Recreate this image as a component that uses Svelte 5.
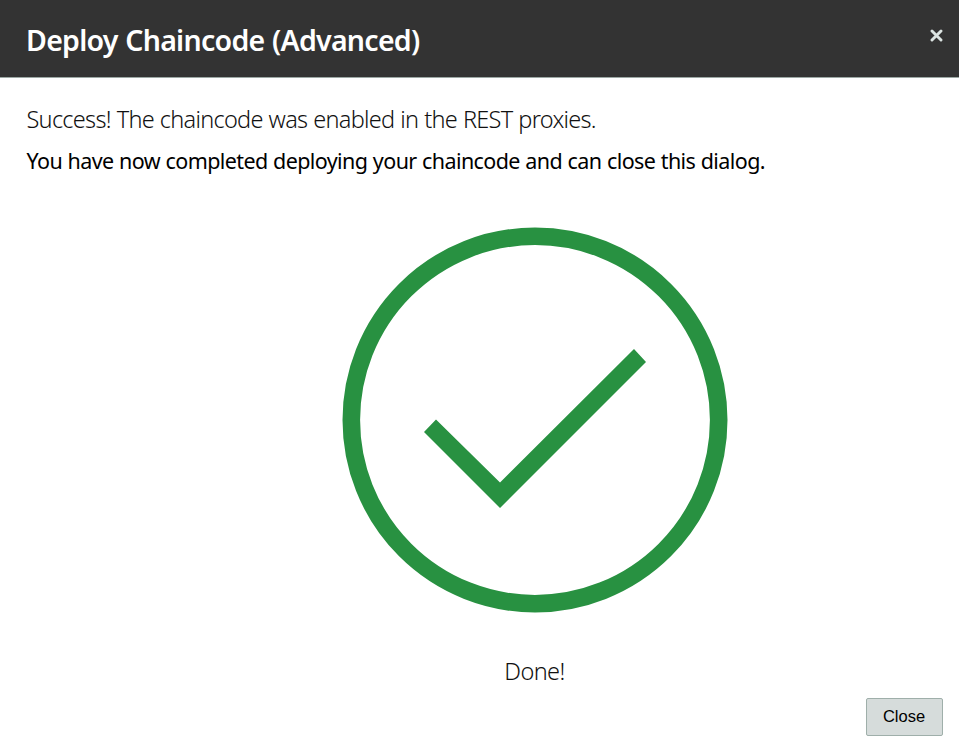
<script>
  let open = $state(true);
  const close = () => (open = false);
</script>

{#if open}
  <section class="dialog" role="dialog" aria-labelledby="dialog-title">
    <header>
      <h1 id="dialog-title">Deploy Chaincode (Advanced)</h1>
      <button class="dismiss" aria-label="Close dialog" onclick={close}>
        <svg width="13" height="13" viewBox="0 0 13 13">
          <path d="M2 2 11 11M11 2 2 11" fill="none" stroke="#dce4e2" stroke-width="2.9" stroke-linecap="round" />
        </svg>
      </button>
    </header>

    <main>
      <p class="success">Success! The chaincode was enabled in the REST proxies.</p>
      <p class="message">You have now completed deploying your chaincode and can close this dialog.</p>
      <div class="result">
        <svg width="386" height="386" viewBox="0 0 386 386" aria-hidden="true">
          <circle cx="193" cy="193" r="183.7" fill="none" stroke="#289141" stroke-width="17.6" />
          <path d="M82 205 94 192.5 158 255.5 292 122 304 135 158 281Z" fill="#289141" />
        </svg>
        <p class="done">Done!</p>
      </div>
    </main>

    <footer>
      <button class="close" onclick={close}>Close</button>
    </footer>
  </section>
{/if}

<style>
  :global(body) {
    background: #fff;
  }
  .dialog {
    display: flex;
    flex-direction: column;
    box-sizing: border-box;
    width: 100%;
    height: 748px;
    overflow: hidden;
    font-family: "Noto Sans", "Open Sans", sans-serif;
    color: #111;
  }
  header {
    display: flex;
    justify-content: space-between;
    align-items: flex-start;
    box-sizing: border-box;
    height: 78px;
    padding: 20px 16px 0 26px;
    background: #333;
    border-bottom: 1px solid #9ca8a4;
  }
  h1 {
    margin: 0;
    font-size: 28.5px;
    line-height: 40px;
    font-weight: 600;
    letter-spacing: -0.72px;
    word-spacing: 0.8px;
    color: #fff;
    white-space: nowrap;
  }
  .dismiss {
    display: flex;
    margin-top: 9px;
    padding: 0;
    border: 0;
    background: none;
  }
  main {
    padding: 20px 0 0 26.5px;
  }
  p {
    margin: 0;
    white-space: nowrap;
  }
  .success {
    font-size: 23.5px;
    line-height: 42px;
    font-weight: 300;
    letter-spacing: -0.72px;
    word-spacing: 0.5px;
  }
  .message {
    font-size: 21.5px;
    line-height: 42px;
    letter-spacing: -0.6px;
    word-spacing: 0.5px;
    color: #000;
  }
  .result {
    display: flex;
    flex-direction: column;
    align-items: center;
    padding: 45px 0 0 83.5px;
  }
  .result svg {
    display: block;
  }
  .done {
    margin-top: 41px;
    font-size: 23.5px;
    line-height: 34px;
    font-weight: 300;
    letter-spacing: -0.6px;
  }
  footer {
    display: flex;
    justify-content: flex-end;
    margin-top: auto;
    padding: 0 16px 12px;
  }
  .close {
    box-sizing: border-box;
    width: 77px;
    height: 38px;
    padding: 0 1px 2px 0;
    border: 1px solid #9fafaa;
    border-radius: 2px;
    background: #d6dcdb;
    font: 16.5px "Liberation Sans", Arial, sans-serif;
    color: #000;
  }
</style>
